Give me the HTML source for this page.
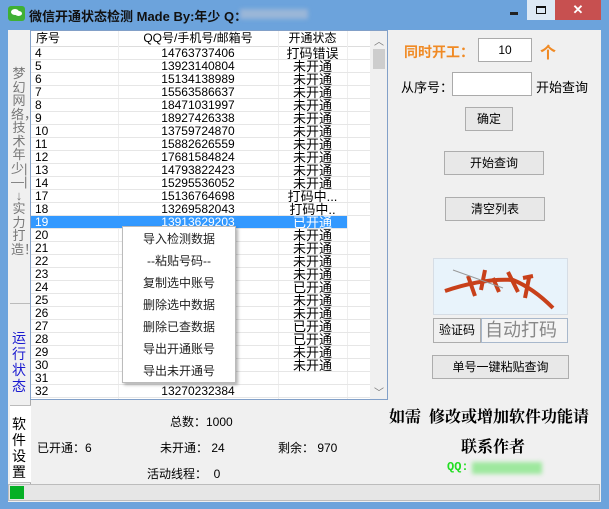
<!DOCTYPE html>
<html><head><meta charset="utf-8"><style>
*{margin:0;padding:0;box-sizing:border-box}
body{width:609px;height:509px;background:#6ca3dc;position:relative;overflow:hidden;font-family:"Liberation Sans","Noto Sans CJK SC",sans-serif;font-size:12px;color:#000}
.a{position:absolute}
.client{left:8px;top:30px;width:593px;height:472px;background:#f0f0f0}
.btn{position:absolute;background:#e8e8e8;border:1px solid #adadad;text-align:center;font-size:12px}
.row{position:absolute;left:31px;width:339px;height:13px;line-height:13px;border-bottom:1px solid #e6e6e6}
.row span{position:absolute;top:0}
.c1{left:4px}.c2{left:87px;width:160px;text-align:center}.c3{left:247px;width:69px;text-align:center;font-size:13px}
.menu div{height:22px;line-height:22px;text-align:center;font-size:12px;color:#222}
</style></head><body>
<div class="a" style="left:8px;top:6px;width:17px;height:15px;background:#3fb034;border-radius:3px"></div>
<div class="a" style="left:11px;top:9px;width:8px;height:6px;background:#fff;border-radius:50%"></div>
<div class="a" style="left:15px;top:11px;width:7px;height:5px;background:#fff;border-radius:50%"></div>
<div class="a" style="left:29px;top:6px;font-weight:bold;font-size:13px;color:#111">微信开通状态检测 Made By:年少 Q：</div>
<div class="a" style="left:240px;top:9px;width:68px;height:10px;background:#9ab6d8;filter:blur(2px)"></div>
<div class="a" style="left:510px;top:12px;width:8px;height:3px;background:#222"></div>
<div class="a" style="left:527px;top:0;width:28px;height:20px;background:#dde9f5"></div>
<div class="a" style="left:536px;top:6px;width:10px;height:8px;border:1px solid #111;border-top-width:2px"></div>
<div class="a" style="left:555px;top:0;width:46px;height:20px;background:#c75050;color:#fff;text-align:center;font-weight:bold;font-size:13px;line-height:20px">✕</div>

<div class="a client"></div>
<div class="a" style="left:9px;top:30px;width:22px;height:455px;background:#f0f0f0;border-right:1px solid #aaa"></div>
<div class="a" style="left:11px;top:67px;width:16px;font-size:13px;line-height:13.5px;color:#777;text-align:center">梦幻网络，技术年少|—|↓实力打造！</div>
<div class="a" style="left:10px;top:303px;width:20px;border-top:1px solid #bbb"></div>
<div class="a" style="left:11px;top:330px;width:16px;font-size:14px;line-height:16px;color:#1a1ad0;text-align:center">运行状态</div>
<div class="a" style="left:10px;top:405px;width:21px;height:78px;background:#fff;border-top:1px solid #bbb;border-bottom:1px solid #bbb"></div>
<div class="a" style="left:11px;top:416px;width:16px;font-size:14px;line-height:16px;color:#000;text-align:center">软件设置</div>

<div class="a" style="left:30px;top:30px;width:358px;height:370px;background:#fff;border:1px solid #82a0c8"></div>
<div class="a" style="left:31px;top:31px;width:339px;height:16px;border-bottom:1px solid #ddd;font-size:12px;line-height:15px">
<span class="a" style="left:5px">序号</span><span class="a" style="left:87px;width:160px;text-align:center">QQ号/手机号/邮箱号</span><span class="a" style="left:247px;width:69px;text-align:center">开通状态</span></div>
<div class="a" style="left:118px;top:31px;height:368px;border-left:1px solid #eee"></div>
<div class="a" style="left:278px;top:31px;height:368px;border-left:1px solid #eee"></div>
<div class="a" style="left:347px;top:31px;height:368px;border-left:1px solid #eee"></div>
<div class="a" style="left:370px;top:31px;width:17px;height:368px;background:#f0f0f0"></div>
<div class="a" style="left:373px;top:49px;width:12px;height:20px;background:#cdcdcd"></div>
<div class="a" style="left:374px;top:33px;font-size:10px;color:#777">︿</div>
<div class="a" style="left:374px;top:384px;font-size:10px;color:#777">﹀</div>

<div class="row" style="top:47px"><span class="c1">4</span><span class="c2">14763737406</span><span class="c3">打码错误</span></div>
<div class="row" style="top:60px"><span class="c1">5</span><span class="c2">13923140804</span><span class="c3">未开通</span></div>
<div class="row" style="top:73px"><span class="c1">6</span><span class="c2">15134138989</span><span class="c3">未开通</span></div>
<div class="row" style="top:86px"><span class="c1">7</span><span class="c2">15563586637</span><span class="c3">未开通</span></div>
<div class="row" style="top:99px"><span class="c1">8</span><span class="c2">18471031997</span><span class="c3">未开通</span></div>
<div class="row" style="top:112px"><span class="c1">9</span><span class="c2">18927426338</span><span class="c3">未开通</span></div>
<div class="row" style="top:125px"><span class="c1">10</span><span class="c2">13759724870</span><span class="c3">未开通</span></div>
<div class="row" style="top:138px"><span class="c1">11</span><span class="c2">15882626559</span><span class="c3">未开通</span></div>
<div class="row" style="top:151px"><span class="c1">12</span><span class="c2">17681584824</span><span class="c3">未开通</span></div>
<div class="row" style="top:164px"><span class="c1">13</span><span class="c2">14793822423</span><span class="c3">未开通</span></div>
<div class="row" style="top:177px"><span class="c1">14</span><span class="c2">15295536052</span><span class="c3">未开通</span></div>
<div class="row" style="top:190px"><span class="c1">17</span><span class="c2">15136764698</span><span class="c3">打码中...</span></div>
<div class="row" style="top:203px"><span class="c1">18</span><span class="c2">13269582043</span><span class="c3">打码中..</span></div>
<div class="row" style="top:216px;background:#3399ff;color:#fff;width:316px"><span class="c1">19</span><span class="c2">13913629203</span><span class="c3">已开通</span></div>
<div class="row" style="top:229px"><span class="c1">20</span><span class="c3">未开通</span></div>
<div class="row" style="top:242px"><span class="c1">21</span><span class="c3">未开通</span></div>
<div class="row" style="top:255px"><span class="c1">22</span><span class="c3">未开通</span></div>
<div class="row" style="top:268px"><span class="c1">23</span><span class="c3">未开通</span></div>
<div class="row" style="top:281px"><span class="c1">24</span><span class="c3">已开通</span></div>
<div class="row" style="top:294px"><span class="c1">25</span><span class="c3">未开通</span></div>
<div class="row" style="top:307px"><span class="c1">26</span><span class="c3">未开通</span></div>
<div class="row" style="top:320px"><span class="c1">27</span><span class="c3">已开通</span></div>
<div class="row" style="top:333px"><span class="c1">28</span><span class="c3">已开通</span></div>
<div class="row" style="top:346px"><span class="c1">29</span><span class="c3">未开通</span></div>
<div class="row" style="top:359px"><span class="c1">30</span><span class="c3">未开通</span></div>
<div class="row" style="top:372px"><span class="c1">31</span></div>
<div class="row" style="top:385px"><span class="c1">32</span><span class="c2">13270232384</span></div>

<div class="a menu" style="left:122px;top:226px;width:114px;height:157px;background:#fff;border:1px solid #bbb;box-shadow:2px 2px 3px rgba(0,0,0,.3);padding-top:1px">
<div>导入检测数据</div><div>--粘贴号码--</div><div>复制选中账号</div><div>删除选中数据</div><div>删除已查数据</div><div>导出开通账号</div><div>导出未开通号</div></div>

<div class="a" style="left:170px;top:413px">总数：1000</div>
<div class="a" style="left:37px;top:439px">已开通：6</div>
<div class="a" style="left:160px;top:439px">未开通： 24</div>
<div class="a" style="left:278px;top:439px">剩余： 970</div>
<div class="a" style="left:147px;top:465px">活动线程：&nbsp;&nbsp;0</div>

<div class="a" style="left:8px;top:484px;width:592px;height:17px;background:#e6e6e6;border:1px solid #bcbcbc"></div>
<div class="a" style="left:10px;top:486px;width:14px;height:13px;background:#06b025"></div>

<div class="a" style="left:404px;top:42px;font-size:14px;font-weight:bold;color:#f08a24">同时开工：</div>
<div class="a" style="left:478px;top:38px;width:54px;height:24px;background:#fff;border:1px solid #aaa;text-align:center;line-height:22px">10</div>
<div class="a" style="left:540px;top:39px;font-size:16px;font-weight:bold;color:#f08a24">个</div>
<div class="a" style="left:401px;top:77px;font-size:13px">从序号：</div>
<div class="a" style="left:452px;top:72px;width:80px;height:24px;background:#fff;border:1px solid #aaa"></div>
<div class="a" style="left:536px;top:77px;font-size:13px">开始查询</div>
<div class="btn" style="left:465px;top:107px;width:48px;height:24px;line-height:22px">确定</div>
<div class="btn" style="left:444px;top:151px;width:100px;height:24px;line-height:22px">开始查询</div>
<div class="btn" style="left:445px;top:197px;width:100px;height:24px;line-height:22px">清空列表</div>
<div class="a" style="left:433px;top:258px;width:135px;height:57px;background:#e8f3fb;border:1px solid #d6dde5"></div>
<svg class="a" style="left:433px;top:258px" width="135" height="57" viewBox="0 0 135 57">
<path d="M12 33 Q50 20 80 22 Q100 30 120 50" stroke="#c8401a" stroke-width="4" fill="none"/>
<path d="M35 18 L42 38 M52 12 L48 32 M60 20 L66 34 M75 14 L85 34 M90 20 L100 18 M96 20 L92 40" stroke="#c8401a" stroke-width="4" fill="none"/>
<path d="M20 12 L70 30" stroke="#999" stroke-width="1"/>
</svg>
<div class="btn" style="left:433px;top:318px;width:48px;height:25px;line-height:23px;background:#f0f0f0">验证码</div>
<div class="a" style="left:481px;top:318px;width:87px;height:25px;background:#f4f4f4;border:1px solid #a8b8cc;font-size:18px;color:#888;line-height:23px;white-space:nowrap;overflow:hidden;padding-left:3px">自动打码</div>
<div class="btn" style="left:432px;top:355px;width:137px;height:24px;line-height:22px">单号一键粘贴查询</div>
<div class="a" style="left:389px;top:404px;font-size:16px;font-weight:bold;font-family:'Noto Serif CJK SC',serif;white-space:nowrap">如需&nbsp; 修改或增加软件功能请</div>
<div class="a" style="left:461px;top:434px;font-size:16px;font-weight:bold;font-family:'Noto Serif CJK SC',serif">联系作者</div>
<div class="a" style="left:447px;top:460px;font-size:12px;font-weight:bold;color:#22dd22;font-family:'Liberation Mono',monospace">QQ:</div>
<div class="a" style="left:472px;top:462px;width:70px;height:12px;background:#9ee89e;filter:blur(2px)"></div>
</body></html>
